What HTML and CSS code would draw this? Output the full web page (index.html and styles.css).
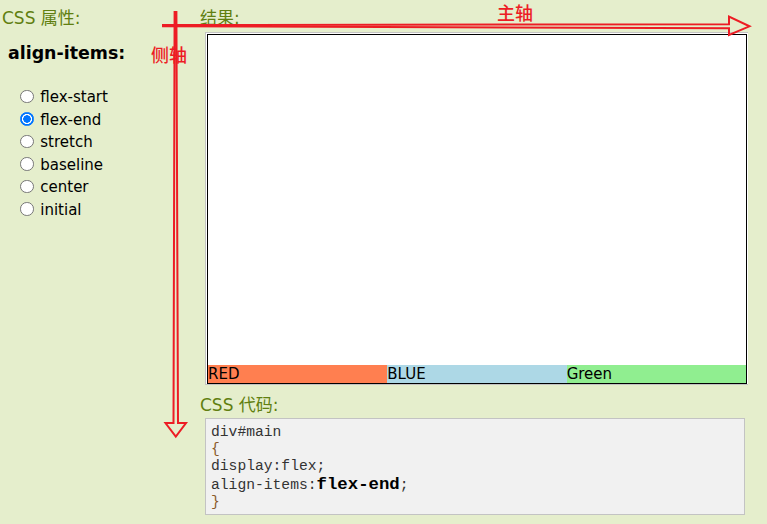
FILE: index.html
```html
<!DOCTYPE html>
<html lang="zh">
<head>
<meta charset="utf-8">
<title>align-items</title>
<link rel="stylesheet" href="styles.css">
</head>
<body>
<div class="page">
  <div class="props">
    <div class="heading">CSS 属性:</div>
    <div class="prop-name">align-items:</div>
    <div class="options">
      <label class="opt"><input type="radio" name="ai"> flex-start</label>
      <label class="opt"><input type="radio" name="ai" checked> flex-end</label>
      <label class="opt"><input type="radio" name="ai"> stretch</label>
      <label class="opt"><input type="radio" name="ai"> baseline</label>
      <label class="opt"><input type="radio" name="ai"> center</label>
      <label class="opt"><input type="radio" name="ai"> initial</label>
    </div>
  </div>
  <div class="result-col">
    <div class="heading">结果:</div>
    <div class="frame">
      <div class="main">
        <div class="item red">RED</div>
        <div class="item blue">BLUE</div>
        <div class="item green">Green</div>
      </div>
    </div>
    <div class="heading code-heading">CSS 代码:</div>
<pre class="code">div#main
<span class="brace">{</span>
display:flex;
align-items:<span class="val">flex-end</span>;
<span class="brace">}</span></pre>
  </div>
</div>
<svg class="overlay" width="767" height="524" viewBox="0 0 767 524" xmlns="http://www.w3.org/2000/svg">
  <polygon class="arrow" points="163,25 729,24.3 729,16.5 749.5,26.3 729,35 729,28.3 163,26.2"/>
  <polygon class="arrow" points="174.6,12 173.5,423 165.5,423 175.8,436.5 186,423 178,423 176.4,12"/>
  <text class="axis-label" x="497" y="20">主轴</text>
  <text class="axis-label" x="151" y="62">侧轴</text>
</svg>
</body>
</html>
```

FILE: styles.css
```css
html, body {
  margin: 0;
  padding: 0;
}
body {
  background: #e5eecc;
  position: relative;
  width: 767px;
  height: 524px;
  overflow: hidden;
  font-family: "DejaVu Sans", "Noto Sans CJK SC", sans-serif;
}
.page {
  display: flex;
  padding-top: 8px;
}
.heading {
  font-size: 17px;
  line-height: 20px;
  color: #617f10;
  white-space: nowrap;
}
.props {
  width: 200px;
  flex: none;
}
.props .heading {
  padding-left: 2px;
}
.prop-name {
  margin-top: 15px;
  margin-left: 8px;
  font-size: 17.4px;
  font-weight: bold;
  line-height: 20px;
  color: #000;
}
.options {
  margin-top: 23px;
  display: flex;
  flex-direction: column;
}
.opt {
  display: block;
  padding-left: 15px;
  font-size: 15px;
  line-height: 22.6px;
  height: 22.6px;
  color: #000;
}
.opt input {
  -webkit-appearance: none;
  appearance: none;
  box-sizing: border-box;
  width: 13.5px;
  height: 13.5px;
  margin: 3px 2px 0 5px;
  border: 1px solid #767676;
  border-radius: 50%;
  background: #fff;
  vertical-align: -1px;
}
.opt input:checked {
  border-color: #0075ff;
  background: radial-gradient(circle, #0075ff 0 3.5px, #fff 4px 4.8px, #0075ff 5.3px);
}
.result-col {
  width: 547px;
  flex: none;
}
.frame {
  margin-top: 4px;
  margin-left: 5px;
  border: 1px solid #c3c3c3;
  border-right: none;
  padding: 1px 0 0 1px;
  background: #fff;
  width: 541px;
}
.main {
  box-sizing: border-box;
  width: 540px;
  height: 350px;
  border: 1px solid #000;
  background: #fff;
  display: flex;
  align-items: flex-end;
}
.item {
  flex: 1;
  font-size: 15px;
  line-height: 18px;
  color: #000;
}
.red { background: coral; }
.blue { background: lightblue; }
.green { background: lightgreen; }
.code-heading {
  margin-top: 10px;
}
.code {
  box-sizing: border-box;
  margin: 3px 0 0 5px;
  width: 540px;
  border: 1px solid #c3c3c3;
  background: #f1f1f1;
  padding: 5px 5px 3px 5px;
  font-family: "Liberation Mono", "Courier New", monospace;
  font-size: 14.67px;
  line-height: 17px;
  color: #333;
}
.brace {
  color: #8a5a2a;
}
.val {
  font-size: 17.33px;
  line-height: 19px;
  font-weight: bold;
  color: #000;
}
.overlay {
  position: absolute;
  left: 0;
  top: 0;
  pointer-events: none;
}
.arrow {
  fill: none;
  stroke: #ed1c24;
  stroke-width: 2;
  stroke-linejoin: miter;
}
.axis-label {
  font-family: "Noto Sans CJK SC", sans-serif;
  font-size: 18px;
  font-weight: 500;
  fill: #ed1c24;
}
```
